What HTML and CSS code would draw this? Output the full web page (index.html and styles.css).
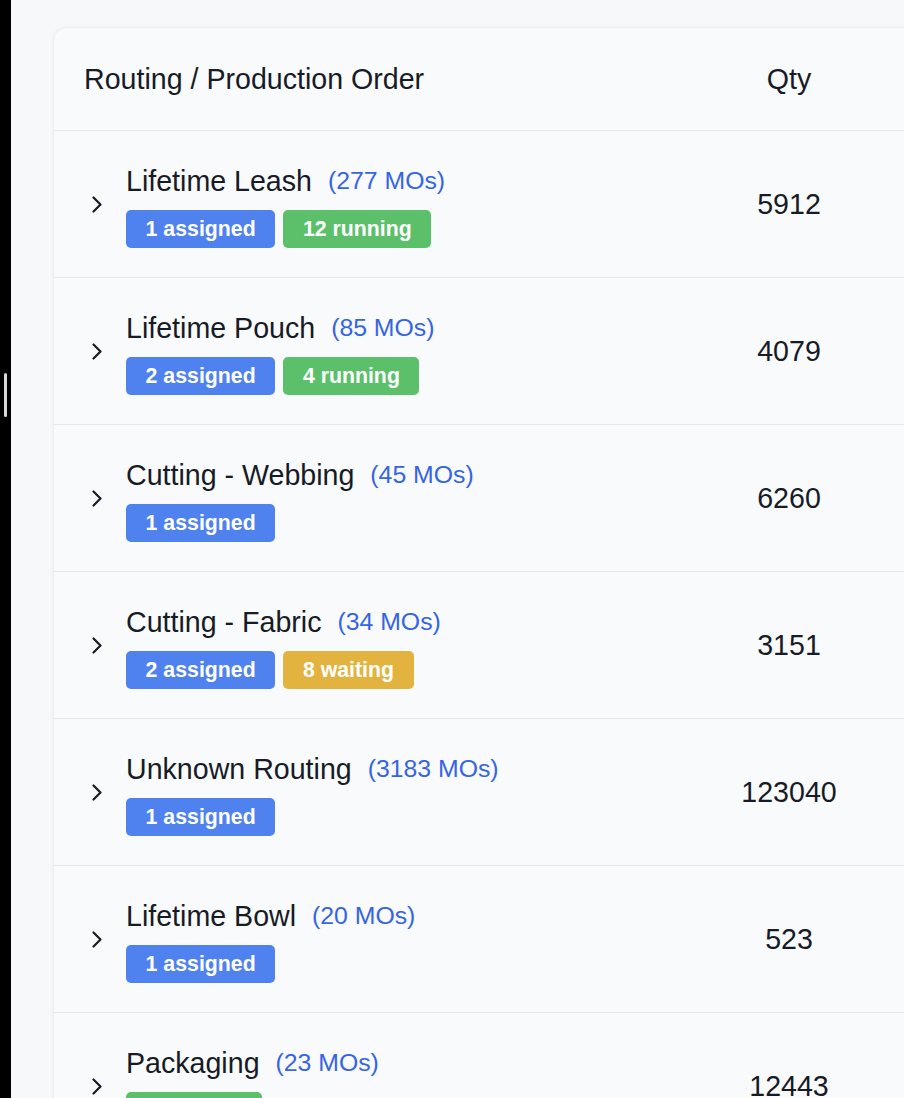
FILE: index.html
```html
<!DOCTYPE html>
<html lang="en">
<head>
<meta charset="utf-8">
<title>Routing / Production Order</title>
<link rel="stylesheet" href="styles.css">
</head>
<body>
<div class="sidebar-edge"><span class="handle"></span></div>
<main class="main">
  <section class="card">
    <div class="table-head">
      <div class="th th-name">Routing / Production Order</div>
      <div class="th th-qty">Qty</div>
    </div>

    <div class="row">
      <div class="chev"><svg width="10" height="17" viewBox="0 0 10 17"><path d="M1.5 1.5 L8.5 8.5 L1.5 15.5" fill="none" stroke="#161b26" stroke-width="2.2" stroke-linecap="round" stroke-linejoin="round"/></svg></div>
      <div class="info">
        <div class="title-line"><span class="name">Lifetime Leash</span><span class="count">(277 MOs)</span></div>
        <div class="badges"><span class="badge blue">1 assigned</span><span class="badge green">12 running</span></div>
      </div>
      <div class="qty">5912</div>
    </div>

    <div class="row">
      <div class="chev"><svg width="10" height="17" viewBox="0 0 10 17"><path d="M1.5 1.5 L8.5 8.5 L1.5 15.5" fill="none" stroke="#161b26" stroke-width="2.2" stroke-linecap="round" stroke-linejoin="round"/></svg></div>
      <div class="info">
        <div class="title-line"><span class="name">Lifetime Pouch</span><span class="count">(85 MOs)</span></div>
        <div class="badges"><span class="badge blue">2 assigned</span><span class="badge green">4 running</span></div>
      </div>
      <div class="qty">4079</div>
    </div>

    <div class="row">
      <div class="chev"><svg width="10" height="17" viewBox="0 0 10 17"><path d="M1.5 1.5 L8.5 8.5 L1.5 15.5" fill="none" stroke="#161b26" stroke-width="2.2" stroke-linecap="round" stroke-linejoin="round"/></svg></div>
      <div class="info">
        <div class="title-line"><span class="name">Cutting - Webbing</span><span class="count">(45 MOs)</span></div>
        <div class="badges"><span class="badge blue">1 assigned</span></div>
      </div>
      <div class="qty">6260</div>
    </div>

    <div class="row">
      <div class="chev"><svg width="10" height="17" viewBox="0 0 10 17"><path d="M1.5 1.5 L8.5 8.5 L1.5 15.5" fill="none" stroke="#161b26" stroke-width="2.2" stroke-linecap="round" stroke-linejoin="round"/></svg></div>
      <div class="info">
        <div class="title-line"><span class="name">Cutting - Fabric</span><span class="count">(34 MOs)</span></div>
        <div class="badges"><span class="badge blue">2 assigned</span><span class="badge yellow">8 waiting</span></div>
      </div>
      <div class="qty">3151</div>
    </div>

    <div class="row">
      <div class="chev"><svg width="10" height="17" viewBox="0 0 10 17"><path d="M1.5 1.5 L8.5 8.5 L1.5 15.5" fill="none" stroke="#161b26" stroke-width="2.2" stroke-linecap="round" stroke-linejoin="round"/></svg></div>
      <div class="info">
        <div class="title-line"><span class="name">Unknown Routing</span><span class="count">(3183 MOs)</span></div>
        <div class="badges"><span class="badge blue">1 assigned</span></div>
      </div>
      <div class="qty">123040</div>
    </div>

    <div class="row">
      <div class="chev"><svg width="10" height="17" viewBox="0 0 10 17"><path d="M1.5 1.5 L8.5 8.5 L1.5 15.5" fill="none" stroke="#161b26" stroke-width="2.2" stroke-linecap="round" stroke-linejoin="round"/></svg></div>
      <div class="info">
        <div class="title-line"><span class="name">Lifetime Bowl</span><span class="count">(20 MOs)</span></div>
        <div class="badges"><span class="badge blue">1 assigned</span></div>
      </div>
      <div class="qty">523</div>
    </div>

    <div class="row">
      <div class="chev"><svg width="10" height="17" viewBox="0 0 10 17"><path d="M1.5 1.5 L8.5 8.5 L1.5 15.5" fill="none" stroke="#161b26" stroke-width="2.2" stroke-linecap="round" stroke-linejoin="round"/></svg></div>
      <div class="info">
        <div class="title-line"><span class="name">Packaging</span><span class="count">(23 MOs)</span></div>
        <div class="badges"><span class="badge green">3 running</span></div>
      </div>
      <div class="qty">12443</div>
    </div>
  </section>
</main>
</body>
</html>
```

FILE: styles.css
```css
html, body {
  margin: 0;
  padding: 0;
  height: 100%;
}

body {
  display: flex;
  background: #f7f8fa;
  overflow: hidden;
  font-family: "Liberation Sans", Arial, Helvetica, sans-serif;
  color: #161b26;
}

.sidebar-edge {
  position: relative;
  flex: 0 0 11px;
  background: #000;
  height: 1098px;
}

.handle {
  position: absolute;
  left: 4px;
  top: 373px;
  width: 3px;
  height: 44px;
  border-radius: 2px;
  background: #d9d9d9;
}

.main {
  flex: 0 0 auto;
  padding: 28px 0 0 43px;
}

.card {
  width: 870px;
  box-sizing: border-box;
  background: #f9fafb;
  border-radius: 13px 0 0 0;
  box-shadow: 0 0 4px rgba(0, 0, 0, 0.09);
  padding: 0 30px;
}

.table-head {
  display: grid;
  grid-template-columns: minmax(0, 1fr) 210px;
  align-items: center;
  height: 102px;
}

.th {
  font-size: 28.6px;
  font-weight: 400;
}

.th-qty {
  text-align: center;
}

.row {
  display: grid;
  grid-template-columns: 42px minmax(0, 1fr) 210px;
  border-top: 1px solid #e4e6ea;
  margin: 0 -30px;
  padding: 29px 30px;
}

.chev {
  align-self: center;
  display: flex;
  padding-left: 8px;
}

.chev svg {
  display: block;
}

.info {
  display: flex;
  flex-direction: column;
  gap: 7px;
}

.title-line {
  display: flex;
  align-items: center;
  gap: 16px;
  height: 43px;
  line-height: 43px;
}

.name {
  font-size: 28.6px;
}

.count {
  font-size: 24.8px;
  color: #3565e4;
  position: relative;
  top: -1px;
}

.badges {
  display: flex;
  gap: 8px;
}

.badge {
  display: inline-flex;
  align-items: center;
  height: 38px;
  padding: 0 19.6px;
  border-radius: 5px;
  color: #fff;
  font-weight: 700;
  font-size: 21.3px;
}

.blue { background: #4f82ee; }
.green { background: #5cc06b; }
.yellow { background: #e2b33e; }

.qty {
  align-self: center;
  text-align: center;
  font-size: 28.6px;
}
```
